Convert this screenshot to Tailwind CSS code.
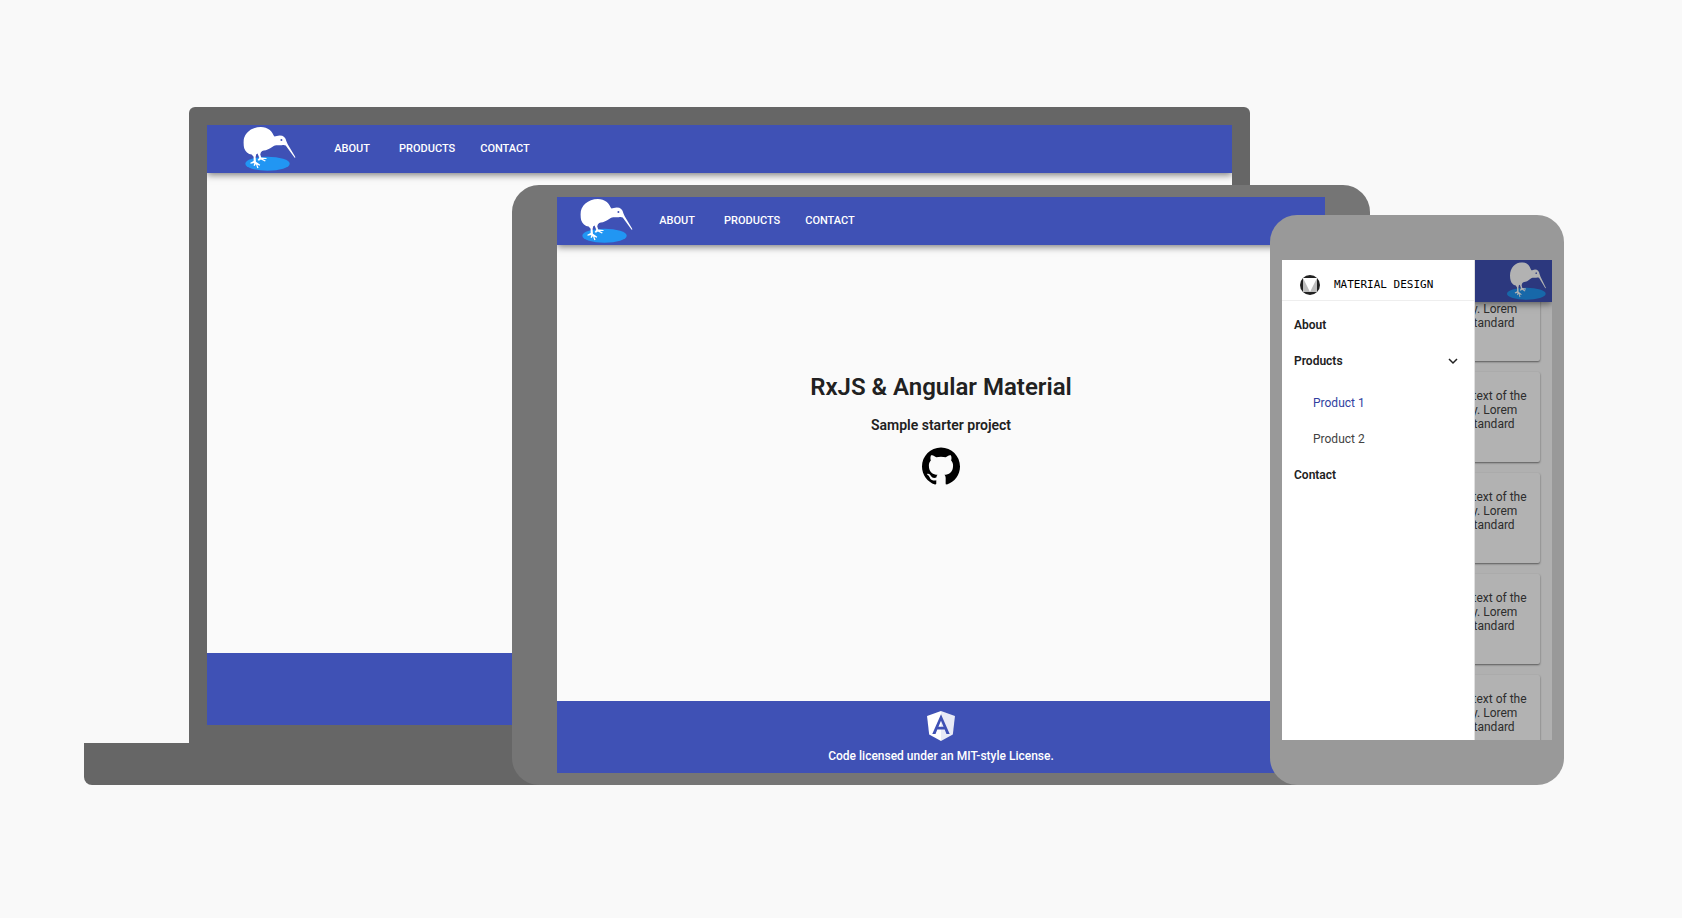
<!DOCTYPE html>
<html lang="en">
<head>
<meta charset="utf-8">
<meta name="viewport" content="width=device-width, initial-scale=1">
<title>RxJS &amp; Angular Material</title>
<script src="https://cdn.jsdelivr.net/npm/@tailwindcss/browser@4"></script>
</head>
<body class="min-h-screen bg-[#f9f9f9] font-['Roboto',sans-serif] text-[#212121]">
<svg class="hidden" aria-hidden="true">
  <symbol id="kiwi" viewBox="39 21 158 128" preserveAspectRatio="none">
    <path fill="currentColor" fill-rule="evenodd" d="M92 21C62 21 39 42 39 68C39 82 43 92 50 98C54 102 59 104 64 104L70 111L70 124L60 129L61 132L72 130L70 137L73 139L77 133L81 146L85 144L81 135L89 138L90 135L77 126L76 112L78 103L82 101L87 114L82 121L86 123L92 119L104 125L107 123L98 118L109 118L109 115L93 113L90 103C92 94 98 91 107 91C117 89 124 82 132 78C140 75 148 77 155 76C160 75 163 75 167 77L194 114L197 113L173 73L169 64C167 53 160 47 149 47C142 47 138 50 133 50C129 45 127 37 119 30C111 24 102 21 92 21ZM154 57a3 3 0 1 1 0 6a3 3 0 1 1 0-6Z"/>
  </symbol>
</svg>
<main class="grid items-end pt-[107px] pr-[118px] pb-12 pl-[84px]">

  <!-- Laptop -->
  <section class="col-start-1 row-start-1 mr-[209px]" aria-label="Laptop">
    <div class="mr-[105px] ml-[105px] rounded-t-md bg-[#666] p-[18px]">
      <div class="flex h-[600px] flex-col overflow-hidden bg-[#fafafa]">
        <header class="flex h-12 shrink-0 items-center bg-[#3f51b5] pl-9 text-white shadow-[0_2px_7px_rgba(0,0,0,0.5)]">
          <a href="#" aria-label="Home">
            <svg class="h-11 w-[53px]" viewBox="39 21 158 133"><ellipse cx="112" cy="132" rx="67" ry="21" fill="#2196f3"/><use href="#kiwi" x="39" y="21" width="158" height="128"/></svg>
          </a>
          <nav class="ml-[22px] flex gap-px pt-px text-[11px] font-medium">
            <button class="min-w-[68px] px-3 py-2">ABOUT</button>
            <button class="px-3 py-2">PRODUCTS</button>
            <button class="px-3 py-2">CONTACT</button>
          </nav>
        </header>
        <div class="flex-1"></div>
        <footer class="h-18 bg-[#3f51b5]"></footer>
      </div>
    </div>
    <div class="h-[42px] rounded-b-lg bg-[#666]"></div>
  </section>

  <!-- Tablet -->
  <section class="col-start-1 row-start-1 mr-[194px] ml-[428px] rounded-[27px] bg-[#757575] px-[45px] py-3" aria-label="Tablet">
    <div class="flex h-[576px] flex-col overflow-hidden bg-[#fafafa]">
      <header class="flex h-12 shrink-0 items-center bg-[#3f51b5] pl-[23px] text-white shadow-[0_2px_7px_rgba(0,0,0,0.5)]">
        <a href="#" aria-label="Home">
          <svg class="h-11 w-[53px]" viewBox="39 21 158 133"><ellipse cx="112" cy="132" rx="67" ry="21" fill="#2196f3"/><use href="#kiwi" x="39" y="21" width="158" height="128"/></svg>
        </a>
        <nav class="ml-[10px] flex gap-px pt-px text-[11px] font-medium">
          <button class="min-w-[68px] px-3 py-2">ABOUT</button>
          <button class="px-3 py-2">PRODUCTS</button>
          <button class="px-3 py-2">CONTACT</button>
        </nav>
      </header>
      <div class="flex flex-1 flex-col items-center justify-center pb-[90px]">
        <h1 class="text-2xl font-semibold">RxJS &amp; Angular Material</h1>
        <h2 class="mt-3 text-sm font-semibold">Sample starter project</h2>
        <a href="#" class="mt-3" aria-label="GitHub">
          <svg class="size-[38px]" viewBox="0 0 24 24" fill="#000"><path d="M12 .297c-6.63 0-12 5.373-12 12 0 5.303 3.438 9.8 8.205 11.385.6.113.82-.258.82-.577 0-.285-.01-1.04-.015-2.04-3.338.724-4.042-1.61-4.042-1.61C4.422 18.07 3.633 17.7 3.633 17.7c-1.087-.744.084-.729.084-.729 1.205.084 1.838 1.236 1.838 1.236 1.07 1.835 2.809 1.305 3.495.998.108-.776.417-1.305.76-1.605-2.665-.3-5.466-1.332-5.466-5.93 0-1.31.465-2.38 1.235-3.22-.135-.303-.54-1.523.105-3.176 0 0 1.005-.322 3.3 1.23.96-.267 1.98-.399 3-.405 1.02.006 2.04.138 3 .405 2.28-1.552 3.285-1.23 3.285-1.23.645 1.653.24 2.873.12 3.176.765.84 1.23 1.91 1.23 3.22 0 4.61-2.805 5.625-5.475 5.92.42.36.81 1.096.81 2.22 0 1.606-.015 2.896-.015 3.286 0 .315.21.69.825.57C20.565 22.092 24 17.592 24 12.297c0-6.627-5.373-12-12-12"/></svg>
        </a>
      </div>
      <footer class="flex h-18 shrink-0 flex-col items-center bg-[#3f51b5] pt-[10px] text-white">
        <svg class="h-[30px] w-7" viewBox="31.9 30 186.2 200" aria-hidden="true"><path fill="#fff" d="M125 30 31.9 63.2l14.2 123.1L125 230Z"/><path fill="#e8eaf6" d="M125 30v200l78.9-43.7 14.2-123.1Z"/><path fill="#3f51b5" d="M125 52.1 66.8 182.6h21.7l11.7-29.2h49.4l11.7 29.2H183L125 52.1Zm17 83.3h-34l17-40.9Z"/></svg>
        <p class="mt-[7px] text-xs font-medium">Code licensed under an MIT-style License.</p>
      </footer>
    </div>
  </section>

  <!-- Phone -->
  <section class="z-10 col-start-1 row-start-1 w-[294px] justify-self-end rounded-[27px] bg-[#999] px-3 py-[45px]" aria-label="Phone">
    <div class="relative flex h-[480px] flex-col overflow-hidden bg-[#fcfcfc]">
      <header class="z-10 flex h-[42px] shrink-0 items-center justify-end bg-[#3f51b5] pr-[6px] text-white shadow-[0_2px_7px_rgba(0,0,0,0.5)]">
        <svg class="h-[38px] w-[39px]" viewBox="0 0 117 113" aria-hidden="true"><ellipse cx="58" cy="95" rx="58" ry="18" fill="#2196f3"/><use href="#kiwi" x="9" y="0" width="108" height="108"/></svg>
      </header>
      <div class="-mt-[31px] flex flex-col gap-[11px] px-3 text-xs/[14px] text-[#424242]">
        <article class="h-[90px] shrink-0 rounded-xs bg-white px-3 pt-[17px] shadow-[0_1px_2px_rgba(0,0,0,0.5)]"><p class="whitespace-nowrap">Lorem Ipsum is simply dummy text of the<br>printing and typesetting industry. Lorem<br>Ipsum has been the industry's standard</p></article>
        <article class="h-[90px] shrink-0 rounded-xs bg-white px-3 pt-[17px] shadow-[0_1px_2px_rgba(0,0,0,0.5)]"><p class="whitespace-nowrap">Lorem Ipsum is simply dummy text of the<br>printing and typesetting industry. Lorem<br>Ipsum has been the industry's standard</p></article>
        <article class="h-[90px] shrink-0 rounded-xs bg-white px-3 pt-[17px] shadow-[0_1px_2px_rgba(0,0,0,0.5)]"><p class="whitespace-nowrap">Lorem Ipsum is simply dummy text of the<br>printing and typesetting industry. Lorem<br>Ipsum has been the industry's standard</p></article>
        <article class="h-[90px] shrink-0 rounded-xs bg-white px-3 pt-[17px] shadow-[0_1px_2px_rgba(0,0,0,0.5)]"><p class="whitespace-nowrap">Lorem Ipsum is simply dummy text of the<br>printing and typesetting industry. Lorem<br>Ipsum has been the industry's standard</p></article>
        <article class="h-[90px] shrink-0 rounded-xs bg-white px-3 pt-[17px] shadow-[0_1px_2px_rgba(0,0,0,0.5)]"><p class="whitespace-nowrap">Lorem Ipsum is simply dummy text of the<br>printing and typesetting industry. Lorem<br>Ipsum has been the industry's standard</p></article>
      </div>

      <!-- Side menu and its backdrop -->
      <div class="absolute inset-0 z-20 bg-black/30">
        <aside class="h-full w-[193px] border-r border-[#e0e0e0] bg-white">
          <div class="flex h-[41px] items-center gap-[14px] border-b border-[#eee] pt-[10px] pl-[18px]">
            <svg class="size-5" viewBox="0 0 60 60" aria-hidden="true"><circle cx="30" cy="30" r="30" fill="#212121"/><path fill="#bdbdbd" d="M9 9h42v42H9Z"/><path fill="#fff" d="M9 9h42L30 51Z"/></svg>
            <span class="pt-px font-['DejaVu_Sans_Mono',monospace] text-[11px] text-black">MATERIAL DESIGN</span>
          </div>
          <nav class="flex flex-col pt-[6px] text-xs">
            <a href="#" class="flex h-9 items-center px-3 font-semibold">About</a>
            <button class="flex h-9 items-center justify-between pr-[13px] pl-3 font-semibold">Products
              <svg class="size-4" viewBox="0 0 16 16" fill="none" stroke="currentColor" stroke-width="1.5" aria-hidden="true"><path d="m4 6 4 4 4-4"/></svg>
            </button>
            <a href="#" class="mt-[6px] flex h-9 items-center pl-[31px] text-[#303f9f]">Product 1</a>
            <a href="#" class="flex h-9 items-center pl-[31px] text-[#424242]">Product 2</a>
            <a href="#" class="flex h-9 items-center px-3 font-semibold">Contact</a>
          </nav>
        </aside>
      </div>
    </div>
  </section>
</main>
</body>
</html>
